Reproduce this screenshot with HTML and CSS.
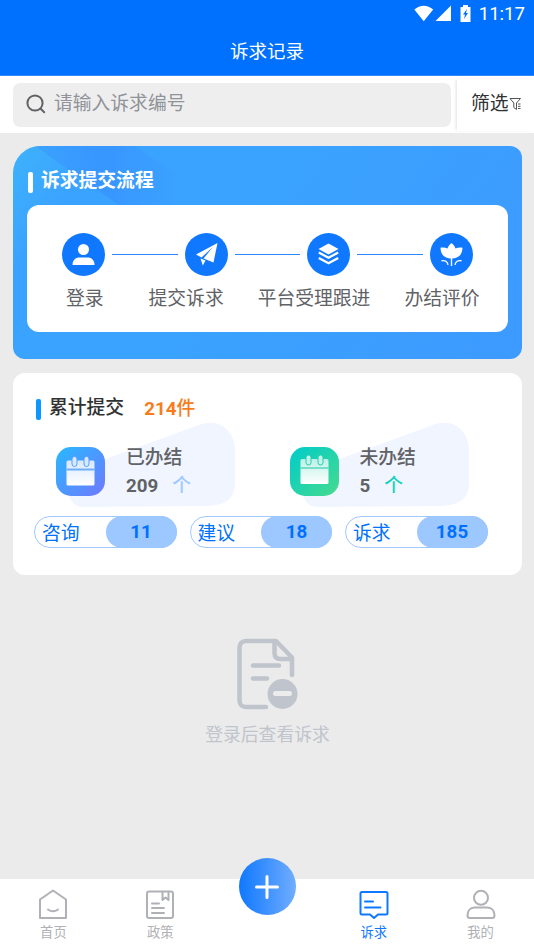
FILE: index.html
```html
<!DOCTYPE html>
<html lang="zh-CN">
<head>
<meta charset="utf-8">
<meta name="viewport" content="width=device-width, initial-scale=1">
<title>诉求记录</title>
<link rel="stylesheet" href="styles.css">
</head>
<body>
<div class="app">
  <header class="header">
    <div class="status">
      <svg width="39" height="18" viewBox="0 0 39 18" fill="#fff"><path d="M.3 4.6C6-.7 13.500-.7 19.200 4.600L9.700 16.200Z"/><path d="M37 .5V16H21.500Z"/></svg>
      <svg class="battery" width="11" height="18" viewBox="0 0 11 18"><path fill="#fff" d="M3 0h5v2h2.500v15H.500V2H3z"/><path d="M7 4 3 9.500h2L4 14l4-6H6z" fill="#0070ff"/></svg>
      <span class="clock">11:17</span>
    </div>
    <h1 class="page-title">诉求记录</h1>
  </header>

  <div class="search-row">
    <div class="search-box">
      <svg width="20" height="20" viewBox="0 0 20 20" fill="none" stroke="#606266" stroke-width="2" stroke-linecap="round"><circle cx="9" cy="9" r="7.600"/><path d="m14.700 14.700 3.500 3.500"/></svg>
      <span>请输入诉求编号</span>
    </div>
    <div class="filter">
      <span>筛选</span>
      <svg width="13" height="14" viewBox="0 0 13 14" fill="none" stroke="#555" stroke-width="1"><path d="M1 1.500h10.500L7.500 6v6.500L4.800 10.500V6zM9 7h2.500M9 9.300h2.500M9 11.500h2.500"/></svg>
    </div>
  </div>

  <main class="content">
    <section class="flow-card">
      <svg class="flow-shade" width="180" height="62" viewBox="0 0 180 62"><defs><linearGradient id="shade" x2="1"><stop stop-color="#3898ff" stop-opacity=".5"/><stop offset=".5" stop-color="#3896ff"/><stop offset="1" stop-color="#3aa2ff"/></linearGradient></defs><path d="M22 0h100l43 30v32h-55z" fill="url(#shade)"/></svg>
      <h2 class="flow-title">诉求提交流程</h2>
      <div class="flow-panel">
        <div class="flow-icons">
          <svg class="step" viewBox="0 0 43 43"><circle cx="21.500" cy="21.500" r="21.500" fill="#1078ff"/><g fill="#fff"><circle cx="21.500" cy="16.500" r="5.500"/><path d="M10.500 32c0-5 3-7.500 7-7.500h8c4 0 7 2.500 7 7.500z"/></g></svg>
          <i class="line"></i>
          <svg class="step" viewBox="0 0 43 43"><circle cx="21.500" cy="21.500" r="21.500" fill="#1078ff"/><path fill="#fff" d="M32.500 10 11 21.500l5.500 3L28 14 18.500 25.500 28.500 29.500zM15.500 25.500l5 2-2.700 5z"/></svg>
          <i class="line"></i>
          <svg class="step" viewBox="0 0 43 43"><circle cx="21.500" cy="21.500" r="21.500" fill="#1078ff"/><path fill="#fff" d="m21.500 10.500 10 5.500-10 5.500-10-5.500z"/><path fill="none" stroke="#fff" stroke-width="2.300" d="m11.800 19.500 9.700 5.300 9.700-5.300M11.800 25l9.700 5.300 9.700-5.300"/></svg>
          <i class="line"></i>
          <svg class="step" viewBox="0 0 43 43"><circle cx="21.500" cy="21.500" r="21.500" fill="#1078ff"/><path fill="#fff" d="M21.500 10c2 1.500 3.300 3.200 4 5.500 2-1 4.500-1.200 7-.800-.2 6.300-3.500 10.800-11 10.800S10.700 21 10.500 14.700c2.500-.4 5-.2 7 .800.7-2.300 2-4 4-5.500z"/><path fill="none" stroke="#fff" stroke-width="1.400" d="M21.500 25v8M11.500 27.800c3.500-.8 6 .7 6.500 4M31.500 27.800c-3.500-.8-6 .7-6.500 4"/></svg>
        </div>
        <div class="flow-labels"><span>登录</span><span>提交诉求</span><span>平台受理跟进</span><span>办结评价</span></div>
      </div>
    </section>

    <section class="total-card">
      <div class="total-head"><h2>累计提交</h2><strong>214<span>件</span></strong></div>
      <div class="stats">
        <div class="stat">
          <svg class="blob" width="170" height="86" viewBox="0 0 170 86"><path fill="#f0f5ff" d="M0 60V51L132 3C153-5 167 10 168 26V60C168 76 160 83 140 84L16 85C5 85 0 74 0 60z"/></svg>
          <svg class="cal" width="49" height="49" viewBox="0 0 49 49"><defs><linearGradient id="blue" x2="1" y2="1"><stop stop-color="#27b9ff"/><stop offset="1" stop-color="#7078ff"/></linearGradient><linearGradient id="paper" x2="0" y2="1"><stop stop-color="#d8e8ff"/><stop offset="1" stop-color="#fff"/></linearGradient></defs><rect width="49" height="49" rx="15" fill="url(#blue)"/><rect x="10.500" y="13.500" width="28" height="25" rx="1.500" fill="url(#paper)"/><path d="M10.500 22.500h28" stroke="#6daeff" stroke-width="2"/><g fill="#d8e8ff" stroke="#55a0ff"><rect x="16" y="9.500" width="5" height="10" rx="2.500"/><rect x="28" y="9.500" width="5" height="10" rx="2.500"/></g></svg>
          <div class="stat-text"><span>已办结</span><span><b>209</b><em class="unit">个</em></span></div>
        </div>
        <div class="stat">
          <svg class="blob" width="170" height="86" viewBox="0 0 170 86"><path fill="#f0f5ff" d="M0 60V51L132 3C153-5 167 10 168 26V60C168 76 160 83 140 84L16 85C5 85 0 74 0 60z"/></svg>
          <svg class="cal" width="49" height="49" viewBox="0 0 49 49"><defs><linearGradient id="green" x2="1" y2="1"><stop stop-color="#00cccb"/><stop offset="1" stop-color="#46db8d"/></linearGradient><linearGradient id="mint" x2="0" y2="1"><stop stop-color="#bdf0e5"/><stop offset="1" stop-color="#fff"/></linearGradient></defs><rect width="49" height="49" rx="15" fill="url(#green)"/><rect x="10.500" y="12" width="28" height="25" rx="1.500" fill="url(#mint)"/><path d="M10.500 21h28" stroke="#43d2b5" stroke-width="1.300"/><g fill="#c6f3e8" stroke="#20cfb8"><rect x="16" y="8" width="5" height="10" rx="2.500"/><rect x="28" y="8" width="5" height="10" rx="2.500"/></g></svg>
          <div class="stat-text"><span>未办结</span><span><b>5</b><em class="unit unit-green">个</em></span></div>
        </div>
      </div>
      <div class="pills">
        <div class="pill"><span>咨询</span><b>11</b></div>
        <div class="pill"><span>建议</span><b>18</b></div>
        <div class="pill"><span>诉求</span><b>185</b></div>
      </div>
    </section>

    <div class="empty">
      <svg width="62" height="72" viewBox="0 0 62 72" fill="none" stroke="#c0c4cc" stroke-width="4.500" stroke-linecap="round" stroke-linejoin="round"><path d="M29 69H9c-4 0-6.500-2.500-6.500-6.500V10C2.500 5.500 5 3 9 3h30l16 16.500V37M37.500 4v11c0 4 2 6 6 6H55M16 27.500h26M16 40.500h14"/><circle cx="45.500" cy="56" r="15" fill="#c0c4cc" stroke="none"/><path d="M38.500 55.500h14" stroke="#ececec" stroke-width="5"/></svg>
      <p>登录后查看诉求</p>
    </div>
  </main>

  <nav class="tabs">
    <div class="tab"><svg width="30" height="32" viewBox="0 0 30 32"><path d="M15 2.500 28 11.500V30H2V11.500zM10 21.500q5 3.500 10 0"/></svg><span>首页</span></div>
    <div class="tab"><svg width="30" height="32" viewBox="0 0 30 32"><rect x="2" y="3.500" width="26" height="26.500" rx="2"/><path d="M17.500 4v8l3-2.500 3 2.500V4M7 15.500h7M7 20h12M7 25h12"/></svg><span>政策</span></div>
    <div class="tab"><div class="add"><svg width="24" height="24" viewBox="0 0 24 24"><path d="M12 1.500v21M1.500 12h21"/></svg></div></div>
    <div class="tab active"><svg width="30" height="32" viewBox="0 0 30 32"><path d="M3 4h24q1.500 0 1.500 1.500V25q0 1.500-1.500 1.500h-8l-4 3.500-4-3.500H3Q1.500 26.500 1.500 25V5.500Q1.500 4 3 4zM6 13.500h8M6 19.500h15.500"/></svg><span>诉求</span></div>
    <div class="tab"><svg width="30" height="32" viewBox="0 0 30 32"><circle cx="15" cy="9.800" r="7"/><path d="M8.500 19.500h13c4.500 0 7 3.500 7 8q0 2.500-2.500 2.500H4q-2.500 0-2.500-2.500c0-4.500 2.500-8 7-8z"/></svg><span>我的</span></div>
  </nav>
</div>
</body>
</html>
```

FILE: styles.css
```css
* { box-sizing: border-box; }
body, h1, h2, p { margin: 0; }
body {
  font-family: Roboto, "Noto Sans CJK SC", sans-serif;
  font-size: 18.8px;
  color: #303133;
  background: #ebebeb;
}
svg { display: block; flex: none; }
.app { display: flex; flex-direction: column; height: 950px; overflow: hidden; }

.header { height: 76px; background: #0070ff; color: #fff; border-bottom: 1px solid #3388f5; }
.status { display: flex; align-items: center; justify-content: flex-end; height: 27px; padding-right: 9px; }
.status .battery { margin: 0 8px 0 7px; }
.clock { font-size: 18.600px; line-height: 27px; padding-top: 2px; }
.page-title { font-size: 18.500px; font-weight: 400; line-height: 50px; text-align: center; }

.search-row { display: flex; height: 57px; background: #fff; padding: 7px 0 6px 13px; }
.search-box {
  display: flex; align-items: center; gap: 8px;
  width: 438px; padding-left: 13px; margin-right: 6px;
  border-radius: 7px; background: #eee; color: #909399; line-height: 40px;
}
.search-box span { margin-top: -3px; }
.search-box svg { margin-top: -3px; }
.filter {
  display: flex; align-items: center; flex: 1;
  margin: -4px 0; padding-left: 14px;
  box-shadow: -2px 0 3px -1px rgba(0, 0, 0, .12);
}
.filter span { margin-top: -8px; }
.filter svg { margin-top: -2px; }

.content { flex: 1; padding: 13px 12px 0 13px; }
.flow-card {
  position: relative; overflow: hidden; height: 213px; padding: 20px 14px 0;
  border-radius: 27px 12px 12px 12px;
  background: linear-gradient(125deg, #3eb2fb 0, #3aa2ff 14%, #3aa2ff 45%, #3d9aff 100%);
}
.flow-shade { position: absolute; left: 0; top: 0; }
.flow-title {
  position: relative; display: flex; align-items: center; gap: 8px;
  height: 30px; padding-left: 1px; margin-bottom: 9px;
  font-size: 18.800px; line-height: 30px; font-weight: 700; color: #fff;
}
.flow-title::before, .total-head h2::before {
  content: ""; width: 5px; height: 21px; border-radius: 2px; background: currentColor;
}
.flow-title::before { margin-top: 2px; }
.flow-panel { position: relative; height: 127px; padding-top: 28px; border-radius: 12px; background: #fff; }
.flow-icons { display: flex; align-items: center; padding: 0 35px; }
.step { width: 43px; height: 43px; }
.line { flex: 1; height: 1px; margin: 0 7px; background: #2c87ff; }
.flow-labels { display: flex; gap: 34px; padding-left: 39px; color: #606266; line-height: 28px; margin-top: 9px; white-space: nowrap; }
.flow-labels span:first-child { margin-right: 11px; }

.total-card { height: 202px; margin-top: 14px; padding: 20px 23px 0; border-radius: 12px; background: #fff; }
.total-head { display: flex; line-height: 28px; }
.total-head h2 { display: flex; align-items: center; gap: 8px; font-size: 18.800px; font-weight: 500; }
.total-head h2::before { background: #0c96ff; margin-top: 2px; }
.total-head strong { margin: 2px 0 0 20px; color: #f87c1b; font-weight: 700; }
.total-head strong span { font-weight: 500; }
.stats { display: flex; gap: 64.500px; padding-left: 20px; margin-top: -3px; }
.stat { position: relative; display: flex; width: 169px; height: 96px; padding-top: 27px; }
.blob { position: absolute; left: 11px; top: 2px; }
.cal { position: relative; }
.stat-text { position: relative; display: flex; flex-direction: column; margin: -3px 0 0 21px; color: #606266; font-weight: 500; line-height: 28px; white-space: nowrap; }
.unit { margin-left: 14px; color: #9dc8ff; font-style: normal; }
.unit-green { color: #14d2bd; }
.pills { display: flex; gap: 13px; margin-left: -2px; }
.pill {
  display: flex; justify-content: space-between; width: 142.500px; height: 32px;
  border: 1px solid #9fc9ff; border-radius: 16px; color: #0070ff; line-height: 35px; padding-left: 7px;
}
.pill b { width: 71px; margin: -1px; border-radius: 16px; background: #9dc7ff; font-weight: 700; text-align: center; line-height: 32px; }

.empty { display: flex; flex-direction: column; align-items: center; padding-top: 63px; }
.empty p { margin-top: 10px; font-size: 17.800px; line-height: 30px; color: #c0c4cc; }

.tabs { display: flex; height: 71px; background: #fff; }
.tab { display: flex; flex: 1; flex-direction: column; align-items: center; padding-top: 9px; color: #b0b1b6; font-size: 13.300px; line-height: 26px; }
.tab svg { fill: none; stroke: currentColor; stroke-width: 2; stroke-linejoin: round; stroke-linecap: round; }
.active { color: #1078ff; }
.add {
  display: flex; align-items: center; justify-content: center; flex: none;
  width: 57px; height: 57px; margin: -30px 0 0 1px; border-radius: 50%;
  color: #fff; background: linear-gradient(90deg, #1078ff, #70adff);
}
.add svg { stroke-width: 3; }
```
